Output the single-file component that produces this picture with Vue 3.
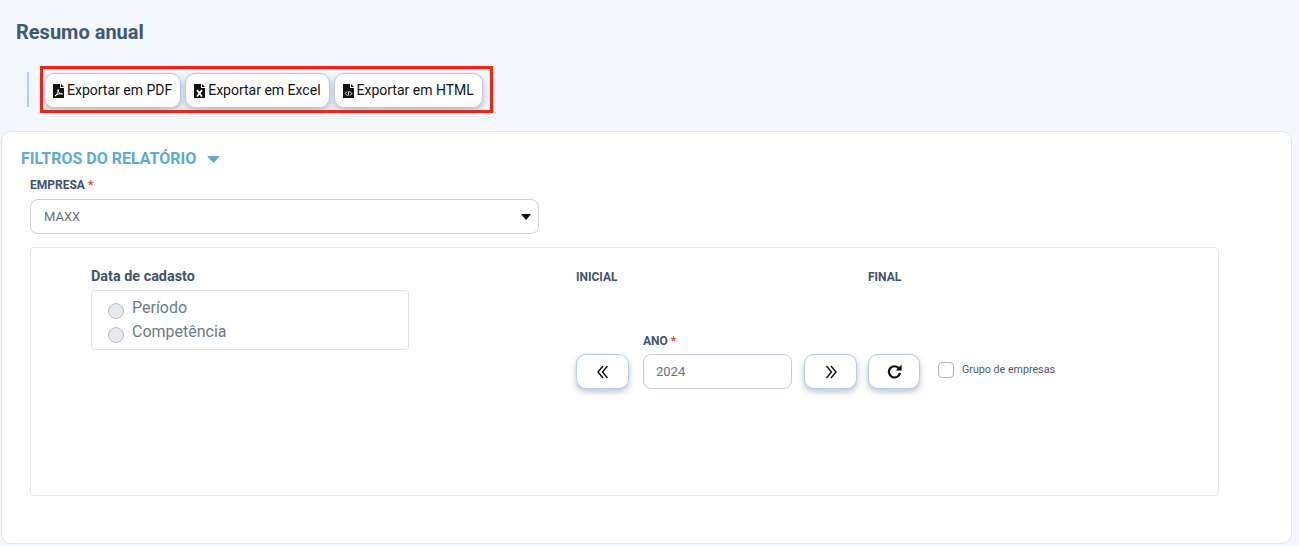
<script setup>
const exportButtons = [
  { label: 'Exportar em PDF', kind: 'pdf' },
  { label: 'Exportar em Excel', kind: 'excel' },
  { label: 'Exportar em HTML', kind: 'html' },
]
</script>

<template>
  <div class="page">
    <h1 class="title">Resumo anual</h1>

    <div class="toolbar">
      <span class="divider"></span>
      <div class="highlight">
        <button v-for="b in exportButtons" :key="b.kind" class="btn export" type="button">
          <svg class="file" viewBox="0 0 11 14" width="11" height="14">
            <path d="M0 0H7V4H11V14H0Z" fill="#111" />
            <path d="M8 0L11 3H8Z" fill="#111" />
            <path v-if="b.kind === 'pdf'" d="M2 12C4 11 6 7 5 5.5C4.4 7 6.5 10 9.5 10C8 9 4 10 2 12Z" fill="none" stroke="#fff" stroke-width="1" />
            <path v-if="b.kind === 'excel'" d="M3 6L8 12.5M8 6L3 12.5" fill="none" stroke="#fff" stroke-width="1.8" />
            <path v-if="b.kind === 'html'" d="M4 7.5L2.2 9.5L4 11.5M7 7.5L8.8 9.5L7 11.5M6.1 7L4.9 12" fill="none" stroke="#fff" stroke-width="0.9" />
          </svg>
          <span>{{ b.label }}</span>
        </button>
      </div>
    </div>

    <section class="card">
      <h2 class="filters">
        FILTROS DO RELATÓRIO
        <svg class="caret" viewBox="0 0 13 7" width="13" height="7"><path d="M0 0H13L6.5 7Z" fill="#5ea9d6" /></svg>
      </h2>

      <label class="label company-label">EMPRESA <em>*</em></label>
      <div class="select">
        <span>MAXX</span>
        <svg viewBox="0 0 10 6" width="10" height="6"><path d="M0 0H10L5 6Z" fill="#000" /></svg>
      </div>

      <div class="period">
        <div class="left">
          <div class="date-title">Data de cadasto</div>
          <div class="radios">
            <div class="radio"><i></i><span>Período</span></div>
            <div class="radio"><i></i><span>Competência</span></div>
          </div>
        </div>

        <div class="right">
          <div class="range-labels">
            <span class="label inicial">INICIAL</span>
            <span class="label">FINAL</span>
          </div>
          <div class="year-label label">ANO <em>*</em></div>
          <div class="controls">
            <button class="btn nav" type="button">
              <svg viewBox="0 0 12 14" width="12" height="14"><path d="M6 1L1 7L6 13M10.5 1L5.5 7L10.5 13" fill="none" stroke="#111" stroke-width="1.4" /></svg>
            </button>
            <div class="year">2024</div>
            <button class="btn nav next" type="button">
              <svg viewBox="0 0 12 14" width="12" height="14"><path d="M1.5 1L6.5 7L1.5 13M6 1L11 7L6 13" fill="none" stroke="#111" stroke-width="1.4" /></svg>
            </button>
            <button class="btn nav redo" type="button">
              <svg viewBox="0 0 15 15" width="15" height="15"><path d="M12 4.5A5.6 5.6 0 1 0 13 9" fill="none" stroke="#111" stroke-width="2.2" /><path d="M14.6 0.4V6.4H8.6Z" fill="#111" /></svg>
            </button>
            <div class="group">
              <span class="check"></span>
              <span class="group-text">Grupo de empresas</span>
            </div>
          </div>
        </div>
      </div>
    </section>
  </div>
</template>

<style>
html, body { margin: 0; background: #f3f6fa; }
</style>

<style scoped>
.page {
  width: 1299px;
  height: 546px;
  overflow: hidden;
  box-sizing: border-box;
  padding: 20px 7px 0 1px;
  background: #f3f6fa;
  font-family: Roboto, "Liberation Sans", sans-serif;
}
.title {
  margin: 0 0 0 15px;
  font-size: 20px;
  line-height: 24px;
  font-weight: 700;
  color: #3f5975;
}
.toolbar {
  display: flex;
  align-items: center;
  margin: 22px 0 18px 26px;
}
.divider {
  width: 2px;
  height: 35px;
  background: #b3cbe6;
  margin-right: 11px;
}
.highlight {
  display: flex;
  gap: 4px;
  padding: 4px 7px 2px 1px;
  border: 3px solid #ff2012;
  box-sizing: content-box;
  height: 35px;
}
.btn {
  display: flex;
  align-items: center;
  justify-content: center;
  box-sizing: border-box;
  background: #fff;
  border: 1px solid #b4cdec;
  border-radius: 10px;
  box-shadow: 0 3px 6px rgba(60, 80, 110, 0.35);
  padding: 0;
  font-family: inherit;
  color: #111;
}
.export {
  height: 35px;
  gap: 3px;
  padding: 0 8px 2px;
  font-size: 14px;
}
.file { margin-top: 2px; }
.card {
  height: 413px;
  box-sizing: border-box;
  background: #fff;
  border: 1px solid #dfe5ec;
  border-radius: 10px;
  padding: 18px 72px 0 28px;
}
.filters {
  margin: 0 0 0 -9px;
  font-size: 16px;
  line-height: 18px;
  font-weight: 700;
  color: #5ea9d6;
  display: flex;
  align-items: center;
  gap: 11px;
}
.caret { margin-top: 1px; }
.label {
  font-size: 12px;
  line-height: 14px;
  font-weight: 700;
  color: #3f5270;
}
.label em { color: #e8404a; font-style: normal; }
.company-label { display: block; margin: 10px 0 7px 0; }
.select {
  height: 35px;
  width: 509px;
  box-sizing: border-box;
  border: 1px solid #ccd2da;
  border-radius: 8px;
  display: flex;
  align-items: center;
  justify-content: space-between;
  padding: 0 7px 0 13px;
  font-size: 13px;
  color: #6b7280;
}
.period {
  margin-top: 13px;
  height: 249px;
  box-sizing: border-box;
  border: 1px solid #e3e6ea;
  border-radius: 4px;
  display: flex;
  padding: 21px 0 0 60px;
}
.left { width: 318px; margin-right: 167px; }
.date-title {
  font-size: 14.4px;
  line-height: 16px;
  font-weight: 700;
  color: #3f5270;
  margin-bottom: 5px;
}
.radios {
  height: 60px;
  box-sizing: border-box;
  border: 1px solid #e0e4e9;
  border-radius: 4px;
  padding: 5px 16px;
}
.radio {
  display: flex;
  height: 24px;
  gap: 8px;
  font-size: 16px;
  line-height: 24px;
  color: #6c7a88;
}
.radio i {
  width: 16px;
  height: 16px;
  box-sizing: border-box;
  margin-top: 7px;
  border-radius: 50%;
  background: #e6e9ed;
  border: 1px solid #b9c0c8;
}
.right { flex: 1; padding-top: 1px; }
.range-labels { display: flex; height: 16px; }
.inicial { width: 292px; }
.year-label { margin: 48px 0 6px 67px; }
.controls { display: flex; align-items: center; }
.nav {
  width: 53px;
  height: 35px;
}
.year {
  width: 149px;
  height: 35px;
  box-sizing: border-box;
  margin: 0 12px 0 14px;
  border: 1px solid #c4ccd8;
  border-radius: 8px;
  padding: 0 12px;
  display: flex;
  align-items: center;
  font-size: 13px;
  color: #6b7280;
}
.next { margin-right: 11px; }
.redo { width: 52px; }
.group {
  display: flex;
  align-items: flex-start;
  gap: 8px;
  margin-left: 18px;
  margin-top: -4px;
}
.check {
  width: 16px;
  height: 16px;
  box-sizing: border-box;
  border: 1px solid #adb5bd;
  border-radius: 4px;
}
.group-text {
  font-size: 10.7px;
  line-height: 14px;
  margin-top: 1px;
  color: #4a5a72;
}
</style>
